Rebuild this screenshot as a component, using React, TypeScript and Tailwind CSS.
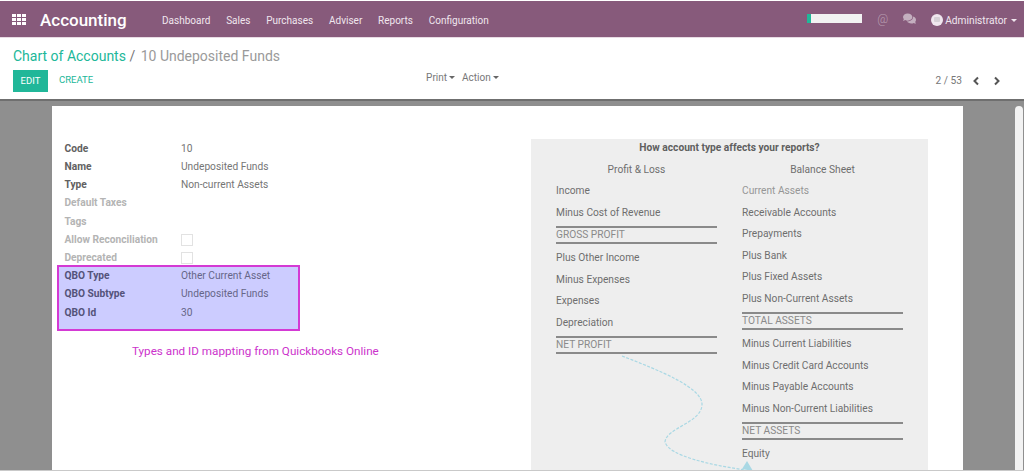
import { FaComments } from "react-icons/fa";

const menu = ["Dashboard", "Sales", "Purchases", "Adviser", "Reports", "Configuration"];

const Caret = ({ color = "border-t-[#666]", gap = "ml-[2px]" }: { color?: string; gap?: string }) => (
  <span className={`inline-block h-0 w-0 border-x-[3px] border-t-[3px] border-x-transparent align-middle ${gap} ${color}`} />
);

const Row = ({ label, value, muted, check, qbo }: { label: string; value?: string; muted?: boolean; check?: boolean; qbo?: boolean }) => (
  <div className="flex h-[18.3px] items-center">
    <div className={`w-[116.5px] shrink-0 font-bold ${muted ? "text-[#b4b4b4]" : qbo ? "text-[#54537a]" : "text-[#616161]"}`}>{label}</div>
    {check ? (
      <span className="h-3 w-3 border border-[#e2e2e2] bg-white" />
    ) : (
      <div className={qbo ? "text-[#666688]" : "text-[#757575]"}>{value}</div>
    )}
  </div>
);

const Line = ({ text, total, muted }: { text: string; total?: boolean; muted?: boolean }) =>
  total ? (
    <div className="my-[3px] flex h-[18px] items-center border-y-2 border-[#8a8a8a] text-[#8a8a8a]">{text}</div>
  ) : (
    <div className={`flex h-[21.5px] items-center ${muted ? "text-[#969696]" : "text-[#6e6e6e]"}`}>{text}</div>
  );

const profit = [
  { text: "Income" },
  { text: "Minus Cost of Revenue" },
  { text: "GROSS PROFIT", total: true },
  { text: "Plus Other Income" },
  { text: "Minus Expenses" },
  { text: "Expenses" },
  { text: "Depreciation" },
  { text: "NET PROFIT", total: true },
];

const balance = [
  { text: "Current Assets", muted: true },
  { text: "Receivable Accounts" },
  { text: "Prepayments" },
  { text: "Plus Bank" },
  { text: "Plus Fixed Assets" },
  { text: "Plus Non-Current Assets" },
  { text: "TOTAL ASSETS", total: true },
  { text: "Minus Current Liabilities" },
  { text: "Minus Credit Card Accounts" },
  { text: "Minus Payable Accounts" },
  { text: "Minus Non-Current Liabilities" },
  { text: "NET ASSETS", total: true },
  { text: "Equity" },
];

export default function App() {
  return (
    <div className="flex h-[472px] w-[1024px] flex-col overflow-hidden bg-white font-['Roboto',sans-serif] text-[10.2px]">
      <header className="mt-px flex h-[36px] shrink-0 items-center bg-[#875a7b] pt-[3px] text-[10px] text-[#f0e6ee]">
        <svg width="14" height="11" viewBox="0 0 14 11" className="-mt-[3px] ml-[12px] fill-white">
          {[0, 4, 8].map((y) =>
            [0, 5, 10].map((x) => <rect key={`${x}-${y}`} x={x} y={y} width="4" height="3" />)
          )}
        </svg>
        <div className="ml-[14px] w-[122px] text-[17px] font-medium text-white">Accounting</div>
        <nav className="flex gap-[15.8px]">
          {menu.map((m) => (
            <span key={m}>{m}</span>
          ))}
        </nav>
        <div className="-mt-[3px] ml-auto flex items-center pr-[7px]">
          <div className="h-[9px] w-[55px] border-l-[4px] border-[#21b799] bg-[#f2f2f2]" />
          <span className="ml-[15px] text-[12px] font-light text-[#b99fb2]">@</span>
          <FaComments size={13} className="ml-[15px] text-[#c4afbf]" />
          <span className="mt-[2px] ml-[15px] flex h-[12px] w-[12px] items-center justify-center rounded-full bg-[#f0e6ee]">
            <span className="h-[5px] w-[6px] rounded-[1px] bg-[#d6d0d6]" />
          </span>
          <span className="mt-[3px] ml-[2px] text-[10.2px]">Administrator</span>
          <span className="mt-[3px] flex">
            <Caret color="border-t-[#f0e6ee]" gap="ml-1" />
          </span>
        </div>
      </header>
      <div className="h-[62px] shrink-0 border-t border-[#e8dbe4] px-[13px] pt-[9px]">
        <div className="text-[14px] leading-[18px] text-[#9a9a9a]">
          <span className="text-[#21b799]">Chart of Accounts</span>
          <span className="text-[#777]"> / </span>
          <span className="ml-[2px]">10 Undeposited Funds</span>
        </div>
        <div className="mt-[5px] flex items-center">
          <button className="h-[22px] w-[35px] bg-[#21b799] text-[9.5px] text-white">EDIT</button>
          <button className="-mt-[2px] ml-[11px] text-[9.5px] text-[#21b799]">CREATE</button>
          <div className="-mt-[8px] ml-[333px] flex gap-[7px] text-[10px] text-[#777]">
            <span>
              Print
              <Caret />
            </span>
            <span>
              Action
              <Caret />
            </span>
          </div>
          <div className="ml-auto flex items-center pr-[10px] text-[#777]">
            <span>2 / 53</span>
            <svg width="8" height="10" viewBox="0 0 8 10" className="ml-[10px] fill-none stroke-[#555] stroke-2">
              <path d="M6 1.5 2.5 5 6 8.5" />
            </svg>
            <svg width="8" height="10" viewBox="0 0 8 10" className="ml-[13px] fill-none stroke-[#555] stroke-2">
              <path d="M2 1.5 5.5 5 2 8.5" />
            </svg>
          </div>
        </div>
      </div>
      <main className="flex min-h-0 flex-1 overflow-hidden border-t-2 border-[#6f6f6f] bg-[#8f8f8f] pt-[5px]">
        <div className="ml-[52px] flex w-[911px] bg-white pt-[33px] pl-[5px]">
          <div className="w-[474px] shrink-0">
            <div className="pl-[7.5px]">
              <Row label="Code" value="10" />
              <Row label="Name" value="Undeposited Funds" />
              <Row label="Type" value="Non-current Assets" />
              <Row label="Default Taxes" muted />
              <Row label="Tags" muted />
              <Row label="Allow Reconciliation" muted check />
              <Row label="Deprecated" muted check />
            </div>
            <div className="-mt-[2px] h-[66px] w-[243px] border-2 border-[#d43ad4] bg-[#ccccff] pl-[5.5px]">
              <div className="-mt-[0.5px]">
                <Row qbo label="QBO Type" value="Other Current Asset" />
                <Row qbo label="QBO Subtype" value="Undeposited Funds" />
                <Row qbo label="QBO Id" value="30" />
              </div>
            </div>
            <div className="mt-[12px] pl-[75px] text-[11.7px] text-[#cc33cc]">Types and ID mappting from Quickbooks Online</div>
          </div>
          <div className="relative w-[397px] shrink-0 bg-[#eeeeee] text-[#6e6e6e]">
            <div className="pt-[2px] text-center font-bold leading-[14px] text-[#5f5f5f]">How account type affects your reports?</div>
            <div className="mt-[8px] flex gap-[25px] pl-[25px]">
              <div className="w-[161px]">
                <div className="mb-[3px] text-center leading-[14px]">Profit &amp; Loss</div>
                {profit.map((l) => (
                  <Line key={l.text} {...l} />
                ))}
              </div>
              <div className="w-[161px]">
                <div className="mb-[3px] text-center leading-[14px]">Balance Sheet</div>
                {balance.map((l) => (
                  <Line key={l.text} {...l} />
                ))}
              </div>
            </div>
            <svg width="397" height="340" viewBox="0 0 397 340" className="absolute -top-px left-0 fill-none">
              <path d="M91 218C130 233 172 250 171 267C170 285 135 290 134 304C138 318 180 327 214 332" stroke="#a9d8e4" strokeWidth="1.2" strokeDasharray="3 1.5" />
              <path d="M211 331 216 323 222 333Z" fill="#a9d8e4" />
            </svg>
          </div>
        </div>
        <div className="mr-px ml-auto w-[8px] rounded-t-[4px] bg-[#f2f2f2]" />
      </main>
      <div className="h-[2px] shrink-0 border-t border-[#c9c9c9] bg-white" />
    </div>
  );
}
